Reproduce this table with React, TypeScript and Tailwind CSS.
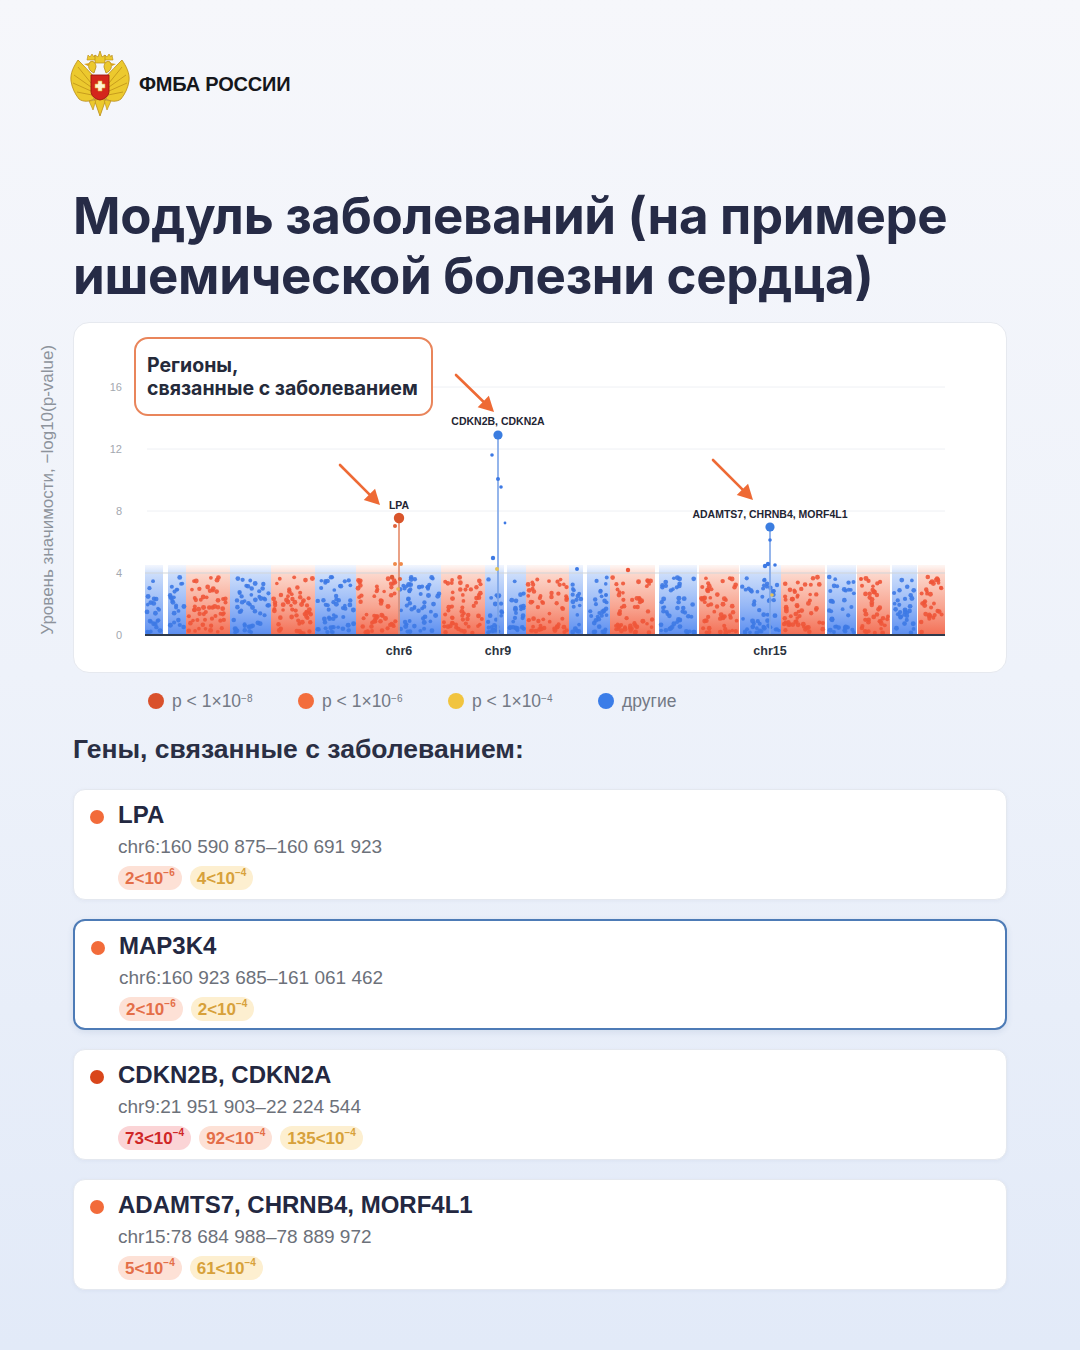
import React from 'react';

const sans = "font-['Liberation_Sans',Arial,sans-serif]";
const inter = "font-['Inter','Liberation_Sans',sans-serif]";

// seeded random so dots stay in place between renders
const makeRng = (seed: number) => () => {
    seed = (seed + 0x6d2b79f5) | 0;
    let t = Math.imul(seed ^ (seed >>> 15), 1 | seed);
    t = (t + Math.imul(t ^ (t >>> 7), 61 | t)) ^ t;
    return ((t ^ (t >>> 14)) >>> 0) / 4294967296;
};

type Col = [number, number, 'r' | 'b'];

const columns: Col[] = [
    [145, 163, 'b'],
    [168, 186, 'b'],
    [186, 230, 'r'],
    [230, 271, 'b'],
    [271, 315, 'r'],
    [315, 356, 'b'],
    [356, 398, 'r'],
    [398, 441, 'b'],
    [441, 485, 'r'],
    [485, 504, 'b'],
    [507, 526, 'b'],
    [526, 569, 'r'],
    [569, 583, 'b'],
    [587, 610, 'b'],
    [610, 655, 'r'],
    [659, 697, 'b'],
    [699, 739, 'r'],
    [740, 781, 'b'],
    [781, 825, 'r'],
    [827, 856, 'b'],
    [857, 890, 'r'],
    [892, 917, 'b'],
    [918, 945, 'r'],
];

const dots = (() => {
    const rand = makeRng(42);
    const out: { x: number; y: number; r: number; c: 'r' | 'b' }[] = [];
    columns.forEach(([x0, x1, c]) => {
        const n = Math.round((x1 - x0) * 1.25);
        for (let i = 0; i < n; i++) {
            out.push({
                x: x0 + 2 + rand() * (x1 - x0 - 4),
                y: 634 - Math.pow(rand(), 1.3) * 56,
                r: 1.8 + rand() * 0.7,
                c,
            });
        }
    });
    return out;
})();

const Arrow = ({ x1, y1, x2, y2 }: { x1: number; y1: number; x2: number; y2: number }) => {
    const len = Math.hypot(x2 - x1, y2 - y1);
    const dx = (x2 - x1) / len;
    const dy = (y2 - y1) / len;
    const bx = x2 - dx * 15;
    const by = y2 - dy * 15;
    return (
        <g>
            <line x1={x1} y1={y1} x2={bx} y2={by} stroke="#ee6a35" strokeWidth={2.6} strokeLinecap="round" />
            <polygon
                points={`${x2},${y2} ${bx - dy * 8},${by + dx * 8} ${bx + dy * 8},${by - dx * 8}`}
                fill="#ee6a35"
            />
        </g>
    );
};

const Chart = () => (
    <svg viewBox="74 324 932 349" width={932} height={349} className="absolute inset-0">
        <defs>
            <linearGradient id="gr" x1="0" y1="0" x2="0" y2="1">
                <stop offset="0" stopColor="#fde8e1" stopOpacity={0.4} />
                <stop offset="0.12" stopColor="#fcd8cd" />
                <stop offset="0.6" stopColor="#f8a591" />
                <stop offset="1" stopColor="#f36f55" />
            </linearGradient>
            <linearGradient id="gb" x1="0" y1="0" x2="0" y2="1">
                <stop offset="0" stopColor="#dfe9fc" stopOpacity={0.4} />
                <stop offset="0.12" stopColor="#cddefb" />
                <stop offset="0.6" stopColor="#94b6f6" />
                <stop offset="1" stopColor="#5c8ef0" />
            </linearGradient>
        </defs>
        {[388, 450, 512].map((y) => (
            <line key={y} x1={147} x2={945} y1={y} y2={y} stroke="#eef0f4" strokeWidth={1} />
        ))}
        {columns.map(([x0, x1, c]) => (
            <rect key={x0} x={x0} y={566} width={x1 - x0} height={70} fill={c === 'r' ? 'url(#gr)' : 'url(#gb)'} />
        ))}
        <line x1={145} x2={945} y1={574} y2={574} stroke="#d2d5da" strokeWidth={1.2} />
        {dots.map((d, i) => (
            <circle key={i} cx={d.x} cy={d.y} r={d.r} fill={d.c === 'r' ? '#ee5538' : '#3d79e4'} opacity={0.9} />
        ))}
        {/* a few loose points above the threshold */}
        <circle cx={628} cy={571} r={2.2} fill="#ee5538" />
        <circle cx={577} cy={570} r={2} fill="#3d79e4" />
        <circle cx={861} cy={580} r={2} fill="#ee5538" />
        <circle cx={606} cy={596} r={2} fill="#3d79e4" />

        {/* LPA */}
        <line x1={399} x2={399} y1={519} y2={636} stroke="#e58a68" strokeWidth={1.6} />
        <circle cx={395} cy={527} r={2} fill="#e0633c" />
        <circle cx={395} cy={565} r={2} fill="#ef8a4a" />
        <circle cx={401} cy={565} r={2} fill="#ef8a4a" />
        <circle cx={392} cy={578} r={2.2} fill="#df5a35" />
        <circle cx={400} cy={580} r={2} fill="#e0633c" />
        <circle cx={398} cy={590} r={1.8} fill="#e9b84a" />
        <circle cx={399} cy={519} r={5.2} fill="#d9552b" />

        {/* CDKN2B */}
        <line x1={498} x2={498} y1={436} y2={636} stroke="#7aa3e6" strokeWidth={1.6} />
        <circle cx={492} cy={456} r={1.8} fill="#3d79e4" />
        <circle cx={498} cy={480} r={2} fill="#3d79e4" />
        <circle cx={501} cy={488} r={1.8} fill="#3d79e4" />
        <circle cx={505} cy={524} r={1.4} fill="#3d79e4" />
        <circle cx={493} cy={559} r={2.2} fill="#3d79e4" />
        <circle cx={497} cy={570} r={2} fill="#e3c35a" />
        <circle cx={498} cy={436} r={4.6} fill="#3b7de0" />

        {/* ADAMTS7 */}
        <line x1={770} x2={770} y1={528} y2={636} stroke="#7aa3e6" strokeWidth={1.6} />
        <circle cx={770} cy={541} r={1.8} fill="#3d79e4" />
        <circle cx={765} cy={567} r={2.2} fill="#3d79e4" />
        <circle cx={768} cy={565} r={2.2} fill="#3d79e4" />
        <circle cx={775} cy={566} r={1.8} fill="#3d79e4" />
        <circle cx={772} cy={596} r={1.8} fill="#e3c35a" />
        <circle cx={770} cy={528} r={4.6} fill="#3b7de0" />

        <line x1={145} x2={945} y1={636} y2={636} stroke="#2f3a4c" strokeWidth={2} />

        <g fontFamily="Liberation Sans, Arial, sans-serif" fontSize={11} fill="#a3a8b0" textAnchor="end">
            <text x={122} y={392}>16</text>
            <text x={122} y={454}>12</text>
            <text x={122} y={516}>8</text>
            <text x={122} y={578}>4</text>
            <text x={122} y={640}>0</text>
        </g>
        <g fontFamily="Liberation Sans, Arial, sans-serif" fontSize={10.5} fontWeight={700} fill="#1f2533" textAnchor="middle">
            <text x={498} y={426}>CDKN2B, CDKN2A</text>
            <text x={399} y={510}>LPA</text>
            <text x={770} y={519}>ADAMTS7, CHRNB4, MORF4L1</text>
        </g>
        <g fontFamily="Liberation Sans, Arial, sans-serif" fontSize={12.5} fontWeight={700} fill="#2c3340" textAnchor="middle">
            <text x={399} y={656}>chr6</text>
            <text x={498} y={656}>chr9</text>
            <text x={770} y={656}>chr15</text>
        </g>

        <Arrow x1={456} y1={376} x2={494} y2={413} />
        <Arrow x1={340} y1={466} x2={380} y2={506} />
        <Arrow x1={713} y1={461} x2={753} y2={501} />
    </svg>
);

const Emblem = () => (
    <svg width={62} height={70} viewBox="0 0 62 70">
        {/* wings */}
        <path
            d="M27 30 C20 22 14 16 9 11 C5 17 1 24 2 32 C3 39 6 45 10 50 C14 53 20 53 25 50 Z"
            fill="#ecc92e"
            stroke="#b88a16"
            strokeWidth={0.8}
        />
        <path
            d="M35 30 C42 22 48 16 53 11 C57 17 61 24 60 32 C59 39 56 45 52 50 C48 53 42 53 37 50 Z"
            fill="#ecc92e"
            stroke="#b88a16"
            strokeWidth={0.8}
        />
        <g stroke="#b88a16" strokeWidth={0.7} fill="none">
            <path d="M9 18 L22 34 M5 26 L22 38 M4 34 L22 42 M8 43 L23 46" />
            <path d="M53 18 L40 34 M57 26 L40 38 M58 34 L40 42 M54 43 L39 46" />
        </g>
        {/* heads */}
        <path d="M25 24 C20 22 18 17 21 13 C24 11 27 14 27 18 Z" fill="#ecc92e" stroke="#b88a16" strokeWidth={0.8} />
        <path d="M37 24 C42 22 44 17 41 13 C38 11 35 14 35 18 Z" fill="#ecc92e" stroke="#b88a16" strokeWidth={0.8} />
        <path d="M21 14 L15 15 L19 17 Z M41 14 L47 15 L43 17 Z" fill="#d9a016" />
        {/* crowns */}
        <path d="M18 11 L19 6 L21 8 L23 5 L25 8 L26 6 L27 11 Z" fill="#ecc92e" stroke="#b88a16" strokeWidth={0.6} />
        <path d="M35 11 L36 6 L38 8 L40 5 L42 8 L43 6 L44 11 Z" fill="#ecc92e" stroke="#b88a16" strokeWidth={0.6} />
        <path d="M26 14 L26 6 L29 8 L31 2 L33 8 L36 6 L36 14 Z" fill="#ecc92e" stroke="#b88a16" strokeWidth={0.7} />
        {/* tail */}
        <path d="M25 50 L31 67 L37 50 Z" fill="#ecc92e" stroke="#b88a16" strokeWidth={0.8} />
        <path d="M20 52 L24 61 L27 51 Z M42 52 L38 61 L35 51 Z" fill="#ecc92e" stroke="#b88a16" strokeWidth={0.6} />
        {/* shield */}
        <path d="M22 26 H40 V42 C40 47 36 50 31 51 C26 50 22 47 22 42 Z" fill="#d4261c" stroke="#9d1512" strokeWidth={0.9} />
        <path d="M29 32 H33 V35 H36 V39 H33 V42 H29 V39 H26 V35 H29 Z" fill="#fff3d6" stroke="#e0b62a" strokeWidth={0.6} />
    </svg>
);

type Tone = 'red' | 'orange' | 'yellow';

const toneClass: Record<Tone, string> = {
    red: 'bg-[#fbd4d6] text-[#cf2626]',
    orange: 'bg-[#fde1d6] text-[#e46e48]',
    yellow: 'bg-[#fdefd0] text-[#d7a13a]',
};

const Badge = ({ tone, base, exp }: { tone: Tone; base: string; exp: string }) => (
    <span className={`inline-flex h-[24px] items-center rounded-full px-[7px] text-[17px] font-bold leading-none ${toneClass[tone]}`}>
        {base}
        <sup className="text-[10px] font-bold">{exp}</sup>
    </span>
);

type Gene = {
    name: string;
    coords: string;
    dot: string;
    active?: boolean;
    badges: { tone: Tone; base: string; exp: string }[];
};

const genes: Gene[] = [
    {
        name: 'LPA',
        coords: 'chr6:160 590 875–160 691 923',
        dot: 'bg-[#f26b3a]',
        badges: [
            { tone: 'orange', base: '2<10', exp: '−6' },
            { tone: 'yellow', base: '4<10', exp: '−4' },
        ],
    },
    {
        name: 'MAP3K4',
        coords: 'chr6:160 923 685–161 061 462',
        dot: 'bg-[#f26b3a]',
        active: true,
        badges: [
            { tone: 'orange', base: '2<10', exp: '−6' },
            { tone: 'yellow', base: '2<10', exp: '−4' },
        ],
    },
    {
        name: 'CDKN2B, CDKN2A',
        coords: 'chr9:21 951 903–22 224 544',
        dot: 'bg-[#d9461b]',
        badges: [
            { tone: 'red', base: '73<10', exp: '−4' },
            { tone: 'orange', base: '92<10', exp: '−4' },
            { tone: 'yellow', base: '135<10', exp: '−4' },
        ],
    },
    {
        name: 'ADAMTS7, CHRNB4, MORF4L1',
        coords: 'chr15:78 684 988–78 889 972',
        dot: 'bg-[#f26b3a]',
        badges: [
            { tone: 'orange', base: '5<10', exp: '−4' },
            { tone: 'yellow', base: '61<10', exp: '−4' },
        ],
    },
];

const GeneCard = ({ gene }: { gene: Gene }) => (
    <div
        className={`relative h-[111px] rounded-[12px] bg-white pl-[44px] pt-[10px] ${
            gene.active
                ? 'border-2 border-[#4d7bb6] shadow-[0_2px_6px_rgba(60,90,140,0.12)]'
                : 'border border-[#e4e8ef] shadow-[0_1px_4px_rgba(60,90,140,0.06)]'
        }`}
    >
        <span className={`absolute left-[16px] top-[20px] h-[14px] w-[14px] rounded-full ${gene.dot}`} />
        <div className="text-[24px] font-bold leading-[30px] text-[#232841]">{gene.name}</div>
        <div className="mt-[4px] text-[19px] leading-[26px] text-[#6c717a]">{gene.coords}</div>
        <div className="mt-[6px] flex gap-[8px]">
            {gene.badges.map((b, i) => (
                <Badge key={i} {...b} />
            ))}
        </div>
    </div>
);

const legend = [
    { color: 'bg-[#d9512c]', label: 'p < 1×10', exp: '−8' },
    { color: 'bg-[#f36d3c]', label: 'p < 1×10', exp: '−6' },
    { color: 'bg-[#f1c43f]', label: 'p < 1×10', exp: '−4' },
    { color: 'bg-[#3b7de8]', label: 'другие', exp: '' },
];

export default function App() {
    return (
        <div
            className={`min-h-[1350px] w-[1080px] bg-gradient-to-b from-[#f6f7fb] via-[#eef2fa] to-[#e2eaf8] px-[73px] pt-[49px] ${sans}`}
        >
            <div className="-ml-[4px] flex items-center gap-[8px]">
                <Emblem />
                <span className="text-[20px] font-bold tracking-[-0.2px] text-[#15171c]">ФМБА РОССИИ</span>
            </div>

            <h1 className={`mt-[67px] text-[51px] font-bold leading-[60px] tracking-[-0.3px] text-[#262b46] ${inter}`}>
                Модуль заболеваний (на примере
                <br />
                ишемической болезни сердца)
            </h1>

            <div className="relative mt-[16px] h-[351px] rounded-[16px] border border-[#e6e9ef] bg-white">
                <Chart />
                <div
                    className={`absolute left-[60px] top-[14px] h-[79px] w-[299px] rounded-[14px] border-2 border-[#e9855b] bg-white pl-[11px] pt-[15px] text-[19.5px] font-bold leading-[23px] text-[#252a3a] ${inter}`}
                >
                    Регионы,
                    <br />
                    связанные с заболеванием
                </div>
                <div className="absolute left-[-26px] top-[154px] flex w-0 items-center justify-center">
                    <span className="-rotate-90 whitespace-nowrap text-[17px] text-[#8d939c]">
                        Уровень значимости, −log10(p-value)
                    </span>
                </div>
            </div>

            <div className="mt-[15px] flex pl-[75px]">
                {legend.map((l, i) => (
                    <div key={i} className="flex w-[150px] items-center gap-[8px]">
                        <span className={`h-[16px] w-[16px] rounded-full ${l.color}`} />
                        <span className="text-[17.5px] text-[#737985]">
                            {l.label}
                            {l.exp && <sup className="text-[10px]">{l.exp}</sup>}
                        </span>
                    </div>
                ))}
            </div>

            <h2 className="mt-[19px] text-[26.5px] font-bold leading-[32px] text-[#2a2f44]">
                Гены, связанные с заболеванием:
            </h2>

            <div className="mt-[24px] flex flex-col gap-[19px]">
                {genes.map((g) => (
                    <GeneCard key={g.name} gene={g} />
                ))}
            </div>
        </div>
    );
}
